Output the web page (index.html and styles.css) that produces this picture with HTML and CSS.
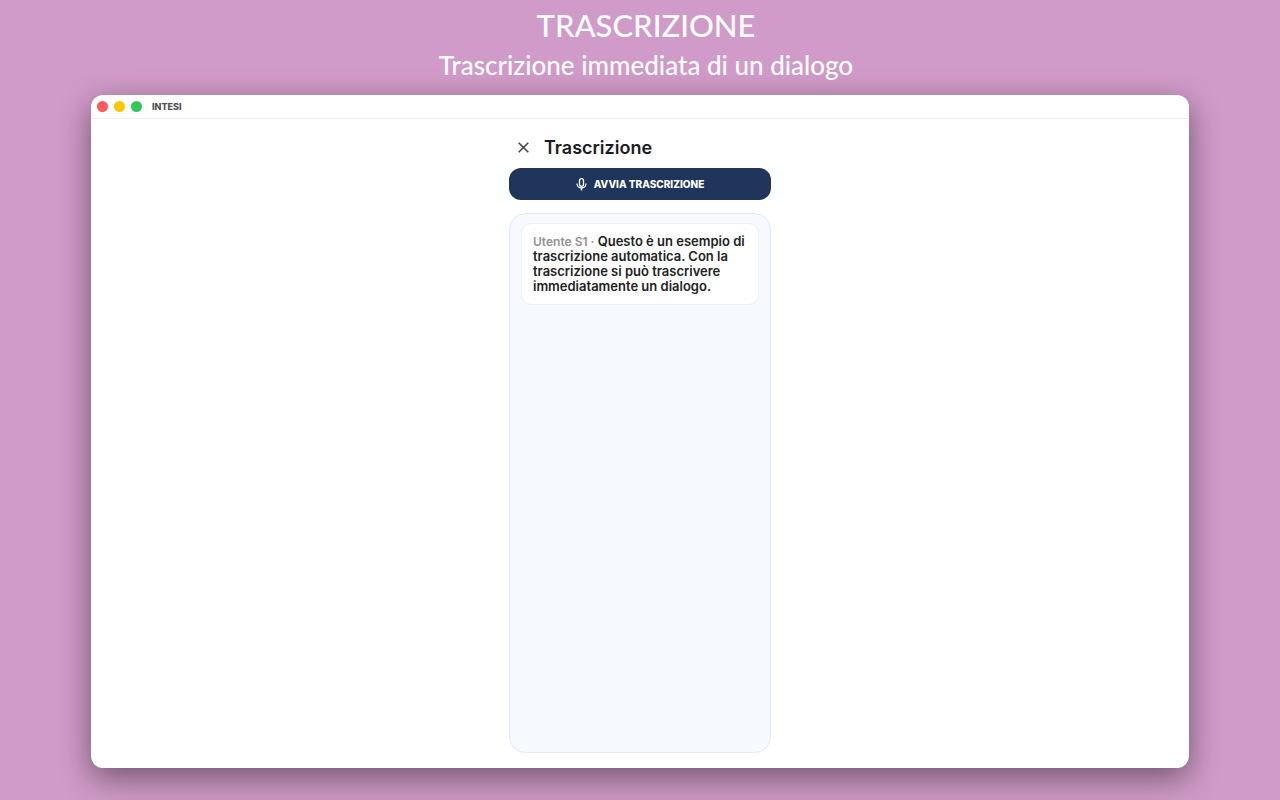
FILE: index.html
```html
<!DOCTYPE html>
<html lang="it">
    <head>
        <meta charset="utf-8">
        <meta name="viewport" content="width=device-width, initial-scale=1">
        <title>Trascrizione</title>
        <link rel="stylesheet" href="styles.css">
    </head>
    <body>
        <header class="header">
            <h1>TRASCRIZIONE</h1>
            <p>Trascrizione immediata di un dialogo</p>
        </header>
        <div class="window">
            <!-- barra del titolo -->
            <div class="titlebar">
                <span class="dot red"></span>
                <span class="dot yellow"></span>
                <span class="dot green"></span>
                <span class="app-name">INTESI</span>
            </div>
            <main class="content">
                <div class="top">
                    <button class="close" type="button" aria-label="Chiudi">
                        <svg width="11" height="11" viewBox="0 0 11 11" fill="none" stroke="currentColor" stroke-width="1.6">
                            <path d="M0.7 0.7L10.3 10.3M10.3 0.7L0.7 10.3"/>
                        </svg>
                    </button>
                    <h2>Trascrizione</h2>
                </div>
                <button class="start" type="button">
                    <svg width="11" height="13" viewBox="0 0 11 13" fill="none" stroke="currentColor" stroke-width="1.3">
                        <rect x="3.5" y="0.7" width="4" height="7.6" rx="2"/>
                        <path d="M1 5.4V5.8a4.5 4.2 0 0 0 9 0V5.4M5.5 10V12.4"/>
                    </svg>
                    AVVIA TRASCRIZIONE
                </button>
                <!-- dialogo trascritto -->
                <section class="panel">
                    <p class="message"><span class="user">Utente S1 ·</span> Questo è un esempio di trascrizione automatica. Con la trascrizione si può trascrivere immediatamente un dialogo.</p>
                </section>
            </main>
        </div>
    </body>
</html>
```
FILE: styles.css
```css
* {
    margin: 0;
    padding: 0;
    box-sizing: border-box;
}
body {
    min-height: 100vh;
    display: flex;
    flex-direction: column;
    padding-bottom: 32px;
    background: #d09bc8;
    font-family: Inter, "Liberation Sans", sans-serif;
}
.header {
    padding: 5px 0 12px 12px;
    color: #fff;
    text-align: center;
    font-family: Lato, "Open Sans", sans-serif;
    font-weight: 500;
}
.header h1 {
    margin-bottom: 3px;
    font-size: 31px;
    line-height: 40px;
    font-weight: 500;
}
.header p {
    font-size: 26px;
    line-height: 35px;
}
.window {
    flex: 1;
    display: flex;
    flex-direction: column;
    margin: 0 91px;
    background: #fff;
    border-radius: 12px;
    box-shadow: 0 10px 32px rgba(0, 0, 0, 0.46);
}
.titlebar {
    display: flex;
    align-items: center;
    gap: 6px;
    height: 24px;
    padding: 0 6px;
    border-bottom: 1px solid #eee;
}
.dot {
    width: 11px;
    height: 11px;
    border-radius: 50%;
}
.red {
    background: #ff5a5c;
}
.yellow {
    background: #fdc700;
}
.green {
    background: #33c759;
}
.app-name {
    margin-left: 4px;
    color: #4f4f52;
    font-size: 9px;
    font-weight: 800;
}
.content {
    flex: 1;
    display: flex;
    flex-direction: column;
    width: 100%;
    max-width: 262px;
    margin: 0 auto;
    padding: 15px 0;
}
.top {
    display: flex;
    align-items: center;
    gap: 7px;
    height: 26px;
}
.top h2 {
    color: #1c1c1f;
    font-size: 18px;
    font-weight: 600;
}
.close {
    display: flex;
    align-items: center;
    justify-content: center;
    width: 28px;
    height: 26px;
    border: 0;
    background: none;
    color: #45454b;
    cursor: pointer;
}
.start {
    display: flex;
    align-items: center;
    justify-content: center;
    gap: 7px;
    height: 32px;
    margin: 8px 0 13px;
    border: 0;
    border-radius: 12px;
    background: #20355b;
    color: #fff;
    font-family: inherit;
    font-size: 10px;
    font-weight: 800;
    cursor: pointer;
}
.panel {
    flex: 1;
    padding: 9px 11px;
    border: 1px solid #e1eaf8;
    border-radius: 16px;
    background: #f6f9fe;
}
.message {
    padding: 10px 11px;
    border: 1px solid #edf0f5;
    border-radius: 10px;
    background: #fff;
    color: #222224;
    font-size: 13px;
    line-height: 15px;
    font-weight: 600;
}
.user {
    color: #929294;
    font-size: 12px;
    line-height: 12px;
}
```
